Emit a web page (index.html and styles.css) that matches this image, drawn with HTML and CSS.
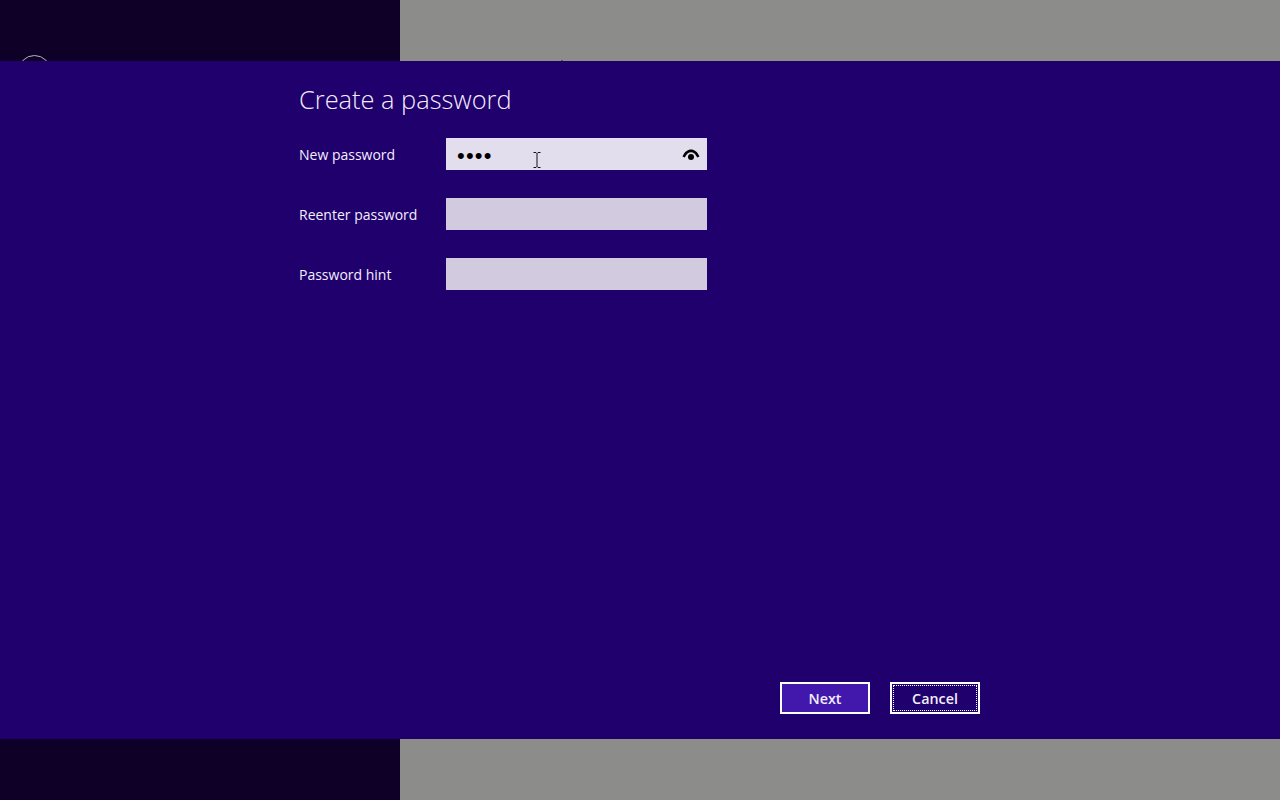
FILE: index.html
```html
<!DOCTYPE html>
<html lang="en">
<head>
    <meta charset="UTF-8">
    <meta name="viewport" content="width=device-width, initial-scale=1.0">
    <title>Create a password</title>
    <link rel="stylesheet" href="styles.css">
</head>
<body>
    <div class="backdrop">
        <div class="backdrop-dark">
            <div class="avatar-ring"></div>
        </div>
        <div class="backdrop-grey">
            <div class="speck"></div>
        </div>
    </div>

    <main class="dialog">
        <h1>Create a password</h1>
        <form class="fields">
            <div class="form-group">
                <label for="password">New password</label>
                <div class="field-wrap">
                    <input class="active" type="password" id="password" value="abcd">
                    <svg class="eye" width="18" height="12" viewBox="0 0 18 12">
                        <path d="M0.500 7.500C2.800 2.500 5.600 0.500 9 0.500s6.200 2 8.500 7l-2.300 1C13.500 5 11.500 3.200 9 3.200S4.500 5 2.800 8.500z" fill="#000"/>
                        <circle cx="9" cy="8" r="3" fill="#000"/>
                    </svg>
                    <svg class="ibeam" width="8" height="16" viewBox="0 0 8 16">
                        <path d="M0.500 0.500h2.500l1 1 1-1h2.500M4 1.500v13M0.500 15.500h2.500l1-1 1 1h2.500" fill="none" stroke="#111" stroke-width="1"/>
                    </svg>
                </div>
            </div>
            <div class="form-group">
                <label for="repassword">Reenter password</label>
                <div class="field-wrap">
                    <input type="password" id="repassword">
                </div>
            </div>
            <div class="form-group">
                <label for="hint">Password hint</label>
                <div class="field-wrap">
                    <input type="text" id="hint">
                </div>
            </div>
        </form>
        <div class="buttons">
            <button type="button" class="btn btn-next">Next</button>
            <button type="button" class="btn btn-cancel">Cancel</button>
        </div>
    </main>

    <div class="backdrop">
        <div class="backdrop-dark"></div>
        <div class="backdrop-grey"></div>
    </div>
</body>
</html>
```

FILE: styles.css
```css
body {
    margin: 0;
    height: 100vh;
    display: flex;
    flex-direction: column;
    overflow: hidden;
    background-color: #1f006c;
    font-family: "Open Sans", "Noto Sans", Arial, sans-serif;
    color: #f3eefc;
}
.backdrop {
    display: flex;
    height: 61px;
}
.backdrop-dark {
    position: relative;
    width: 400px;
    overflow: hidden;
    background-color: #0e0026;
}
.backdrop-grey {
    position: relative;
    flex: 1;
    background-color: #8c8c8b;
}
.avatar-ring {
    position: absolute;
    left: 18px;
    top: 55px;
    width: 31px;
    height: 31px;
    border: 1.500px solid #b9b4c4;
    border-radius: 50%;
}
.speck {
    position: absolute;
    left: 161px;
    bottom: 0;
    width: 2px;
    height: 1px;
    background-color: #5a5a5a;
}
.dialog {
    flex: 1;
    display: flex;
    flex-direction: column;
    padding: 0 300px 25px 299px;
}
h1 {
    margin: 20px 0 20px;
    font-size: 25.400px;
    line-height: 37px;
    font-weight: 300;
}
.fields {
    display: flex;
    flex-direction: column;
    gap: 28px;
}
.form-group {
    display: flex;
    align-items: center;
}
label {
    width: 147px;
    font-size: 14px;
}
.field-wrap {
    position: relative;
    width: 261px;
    height: 32px;
}
input {
    box-sizing: border-box;
    display: block;
    width: 100%;
    height: 100%;
    padding: 2px 40px 0 10px;
    border: none;
    border-radius: 0;
    outline: none;
    background-color: #d2cade;
    color: #000;
    font-size: 14px;
}
input.active {
    padding: 3px 40px 0 11px;
    background-color: #e3deed;
    font-size: 22px;
    letter-spacing: 1.200px;
}
.eye {
    position: absolute;
    left: 236px;
    top: 11px;
}
.ibeam {
    position: absolute;
    left: 87px;
    top: 14px;
}
.buttons {
    margin-top: auto;
    display: flex;
    justify-content: flex-end;
    gap: 20px;
}
.btn {
    box-sizing: border-box;
    width: 90px;
    height: 32px;
    padding: 0;
    border: 2px solid #fff;
    border-radius: 0;
    color: #f3eefc;
    font-family: inherit;
    font-size: 14.300px;
    font-weight: 600;
    cursor: pointer;
}
.btn-next {
    background-color: #4218ac;
}
.btn-cancel {
    background-color: #1f006c;
    outline: 1px dotted #fff;
    outline-offset: -4px;
}
```
